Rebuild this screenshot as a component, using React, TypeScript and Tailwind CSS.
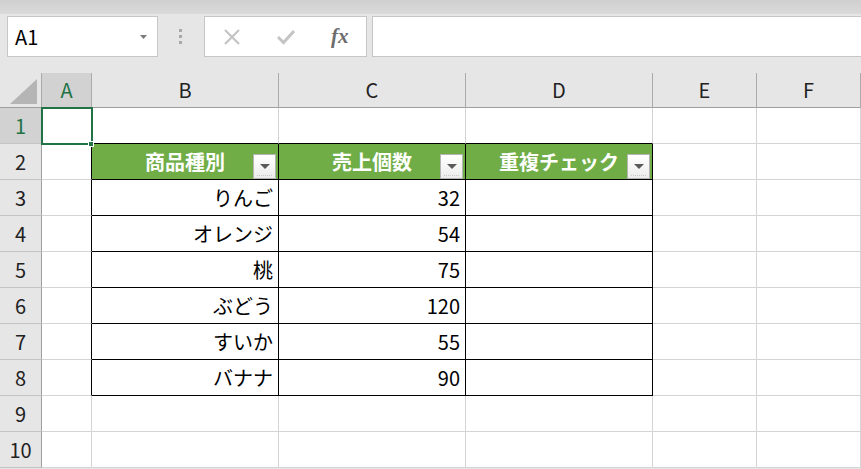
const COLS = ['A', 'B', 'C', 'D', 'E', 'F']

const HEADERS = ['商品種別', '売上個数', '重複チェック']

const DATA: [string, string][] = [
  ['りんご', '32'],
  ['オレンジ', '54'],
  ['桃', '75'],
  ['ぶどう', '120'],
  ['すいか', '55'],
  ['バナナ', '90'],
]

function FilterButton() {
  return (
    <div className="absolute right-[2px] top-[10px] w-[23px] h-[25px] border border-[#b4b4b4] bg-gradient-to-b from-white to-[#ececec] flex items-center justify-center">
      <svg width="10" height="6" viewBox="0 0 10 6">
        <path d="M0 0 L10 0 L5 5 Z" fill="#5a5a5a" />
      </svg>
      <div className="absolute left-[3px] right-[3px] bottom-[2px] border-b border-dotted border-[#c8c8c8]" />
    </div>
  )
}

function Cell({ r, c }: { r: number; c: number }) {
  const inTable = r >= 2 && r <= 8 && c >= 1 && c <= 3
  const rightBlack = inTable || (c === 0 && r >= 2 && r <= 8)
  const bottomBlack = inTable || (r === 1 && c >= 1 && c <= 3)
  const borders = `${rightBlack ? 'border-r-black' : 'border-r-[#d4d4d4]'} ${bottomBlack ? 'border-b-black' : 'border-b-[#d4d4d4]'}`

  if (r === 2 && inTable) {
    return (
      <div className={`relative border-r border-b ${borders} bg-[#70ad47] flex items-center justify-center text-white font-bold text-[20px]`}>
        <span>{HEADERS[c - 1]}</span>
        <FilterButton />
      </div>
    )
  }

  if (inTable) {
    const row = DATA[r - 3]
    const text = c === 1 ? row[0] : c === 2 ? row[1] : ''
    return (
      <div className={`border-r border-b ${borders} bg-white flex items-center justify-end pr-[5px] text-black text-[20px]`}>
        {text}
      </div>
    )
  }

  if (r === 1 && c === 0) {
    return (
      <div className={`relative border-r border-b ${borders} bg-white`}>
        <div className="absolute -left-[1px] -top-[1px] w-[52px] h-[38px] border-2 border-[#217346] z-10" />
        <div className="absolute -right-[3px] -bottom-[4px] w-[6px] h-[6px] bg-[#217346] border border-white z-20" />
      </div>
    )
  }

  return <div className={`border-r border-b ${borders} bg-white`} />
}

export default function App() {
  return (
    <div className="w-[861px] h-[469px] overflow-hidden bg-[#e6e6e6] font-['Noto_Sans_CJK_JP',sans-serif] text-[#222]">
      {/* ribbon edge */}
      <div className="h-[14px] bg-gradient-to-b from-[#cfcfcf] to-[#dadada]" />

      {/* formula bar */}
      <div className="flex items-start pl-[7px] pt-[2px] h-[59px]">
        <div className="w-[151px] h-[41px] bg-white border border-[#c6c6c6] flex items-center justify-between pl-[7px] pr-[10px]">
          <span className="text-[20px] text-black">A1</span>
          <svg width="7" height="4" viewBox="0 0 7 4">
            <path d="M0 0 L7 0 L3.5 4 Z" fill="#7a7a7a" />
          </svg>
        </div>
        <div className="w-[46px] h-[41px] flex flex-col items-center justify-center gap-[3px] pr-[2px]">
          <div className="w-[3px] h-[3px] bg-[#a8a8a8]" />
          <div className="w-[3px] h-[3px] bg-[#a8a8a8]" />
          <div className="w-[3px] h-[3px] bg-[#a8a8a8]" />
        </div>
        <div className="w-[163px] h-[41px] bg-white border border-[#c6c6c6] flex items-center pl-[18px]">
          <svg width="18" height="16" viewBox="0 0 18 16">
            <path d="M2 1 L16 15 M16 1 L2 15" stroke="#c4c4c4" strokeWidth="2.2" fill="none" />
          </svg>
          <svg width="18" height="16" viewBox="0 0 18 16" className="ml-[36px]">
            <path d="M1 8 L6.5 13.5 L17 2" stroke="#c4c4c4" strokeWidth="3" fill="none" />
          </svg>
          <span className="ml-[36px] font-['Liberation_Serif',serif] italic font-bold text-[21px] leading-none text-[#6d6d6d]">fx</span>
        </div>
        <div className="ml-[5px] flex-1 h-[41px] bg-white border border-[#c6c6c6] border-r-0" />
      </div>

      {/* sheet */}
      <div className="grid grid-cols-[42px_50px_187px_187px_187px_104px_104px] grid-rows-[35px_repeat(10,36px)] text-[20px]">
        <div className="border-r border-b border-r-[#ababab] border-b-[#9f9f9f] flex items-end justify-end pr-[4px] pb-[3px]">
          <svg width="27" height="25" viewBox="0 0 27 25">
            <path d="M27 0 L27 25 L0 25 Z" fill="#b5b5b5" />
          </svg>
        </div>
        {COLS.map((col, i) => (
          <div
            key={col}
            className={`border-r border-b border-r-[#ababab] border-b-[#9f9f9f] flex items-center justify-center ${i === 0 ? 'bg-[#d2d2d2] text-[#217346]' : 'text-[#222]'}`}
          >
            {col}
          </div>
        ))}

        {Array.from({ length: 10 }, (_, ri) => {
          const r = ri + 1
          return [
            <div
              key={`h${r}`}
              className={`border-r border-b border-r-[#9f9f9f] border-b-[#c4c4c4] flex items-center justify-center ${r === 1 ? 'bg-[#d2d2d2] text-[#217346]' : 'bg-[#e6e6e6] text-[#222]'}`}
            >
              {r}
            </div>,
            ...COLS.map((_, c) => <Cell key={`${r}-${c}`} r={r} c={c} />),
          ]
        })}
      </div>
    </div>
  )
}
